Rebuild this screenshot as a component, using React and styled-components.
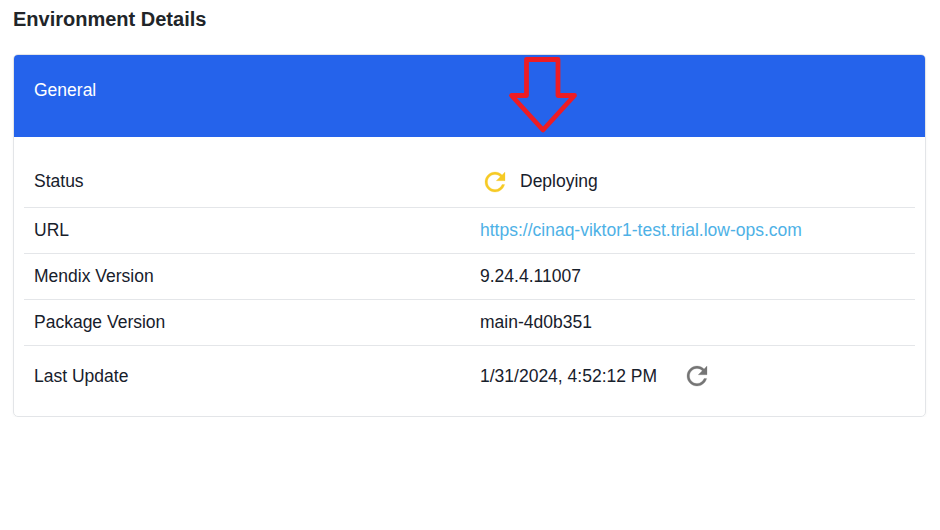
import React from "react";
import styled, { createGlobalStyle } from "styled-components";

const GlobalStyle = createGlobalStyle`
  *, *::before, *::after { box-sizing: border-box; }
  body {
    margin: 0;
    background: #fff;
    color: #17202b;
    font-family: "Liberation Sans", Arial, sans-serif;
    font-size: 17.5px;
  }
`;

const Page = styled.main`
  padding: 7px 14px 0 13px;
`;

const Title = styled.h1`
  margin: 0 0 23px;
  color: #212529;
  font-size: 20px;
  line-height: 24px;
  font-weight: 700;
`;

const Card = styled.section`
  border: 1px solid #e3e5e8;
  border-radius: 5px;
  overflow: hidden;
  box-shadow: 0 1px 3px rgba(0, 0, 0, 0.04);
`;

const CardHeader = styled.header`
  position: relative;
  height: 82px;
  padding: 23px 20px 0;
  background: #2563eb;
  color: #fff;
  line-height: 24px;
`;

const HeaderArrow = styled.svg`
  position: absolute;
  left: 492px;
  top: 0;
`;

const Details = styled.dl`
  margin: 0;
  padding: 17px 10px 10px;
`;

const Row = styled.div`
  display: grid;
  grid-template-columns: 446px 1fr;
  align-items: center;
  height: ${({ $height }) => $height || 46}px;
  padding: 0 10px ${({ $height }) => ($height ? 0 : 1)}px;
  border-bottom: 1px solid #e4e6e9;

  &:last-child { border-bottom: 0; }
`;

const Label = styled.dt`
  line-height: 24px;
`;

const Value = styled.dd`
  display: flex;
  align-items: center;
  margin: 0;
  line-height: 24px;
`;

const Link = styled.a`
  color: #4eb1e6;
  text-decoration: none;
`;

const RefreshIcon = styled.svg`
  flex: none;
  width: 30px;
  height: 30px;
  fill: currentColor;
  stroke: currentColor;
  stroke-width: 0.2;
`;

const StatusIcon = styled(RefreshIcon)`
  margin: 2px 10px 0 0;
  color: #f6ca25;
`;

const RefreshButton = styled.button`
  display: flex;
  margin: 0 0 0 25px;
  padding: 0;
  border: 0;
  background: none;
  color: #757575;
`;

const refreshPath =
  "M17.65 6.35C16.2 4.9 14.21 4 12 4c-4.42 0-7.99 3.58-7.99 8s3.57 8 7.99 8c3.73 0 6.84-2.55 7.73-6h-2.08c-.82 2.33-3.04 4-5.65 4-3.31 0-6-2.69-6-6s2.69-6 6-6c1.66 0 3.14.69 4.22 1.78L13 11h7V4l-2.35 2.35z";

export default function App() {
  return (
    <Page>
      <GlobalStyle />
      <Title>Environment Details</Title>
      <Card>
        <CardHeader>
          General
          <HeaderArrow width="74" height="80" viewBox="0 0 74 80" aria-hidden="true">
            <path
              d="M20.5 4.5H52V40.5H68.5L37 75L5.5 40.5H20.5Z"
              fill="none"
              stroke="#ed1c24"
              strokeWidth="4.8"
              strokeLinejoin="round"
            />
          </HeaderArrow>
        </CardHeader>
        <Details>
          <Row $height={54}>
            <Label>Status</Label>
            <Value>
              <StatusIcon viewBox="0 0 24 24" aria-hidden="true">
                <path d={refreshPath} />
              </StatusIcon>
              Deploying
            </Value>
          </Row>
          <Row>
            <Label>URL</Label>
            <Value>
              <Link href="https://cinaq-viktor1-test.trial.low-ops.com">
                https://cinaq-viktor1-test.trial.low-ops.com
              </Link>
            </Value>
          </Row>
          <Row>
            <Label>Mendix Version</Label>
            <Value>9.24.4.11007</Value>
          </Row>
          <Row>
            <Label>Package Version</Label>
            <Value>main-4d0b351</Value>
          </Row>
          <Row $height={60}>
            <Label>Last Update</Label>
            <Value>
              1/31/2024, 4:52:12 PM
              <RefreshButton type="button" aria-label="Refresh">
                <RefreshIcon viewBox="0 0 24 24" aria-hidden="true">
                  <path d={refreshPath} />
                </RefreshIcon>
              </RefreshButton>
            </Value>
          </Row>
        </Details>
      </Card>
    </Page>
  );
}
